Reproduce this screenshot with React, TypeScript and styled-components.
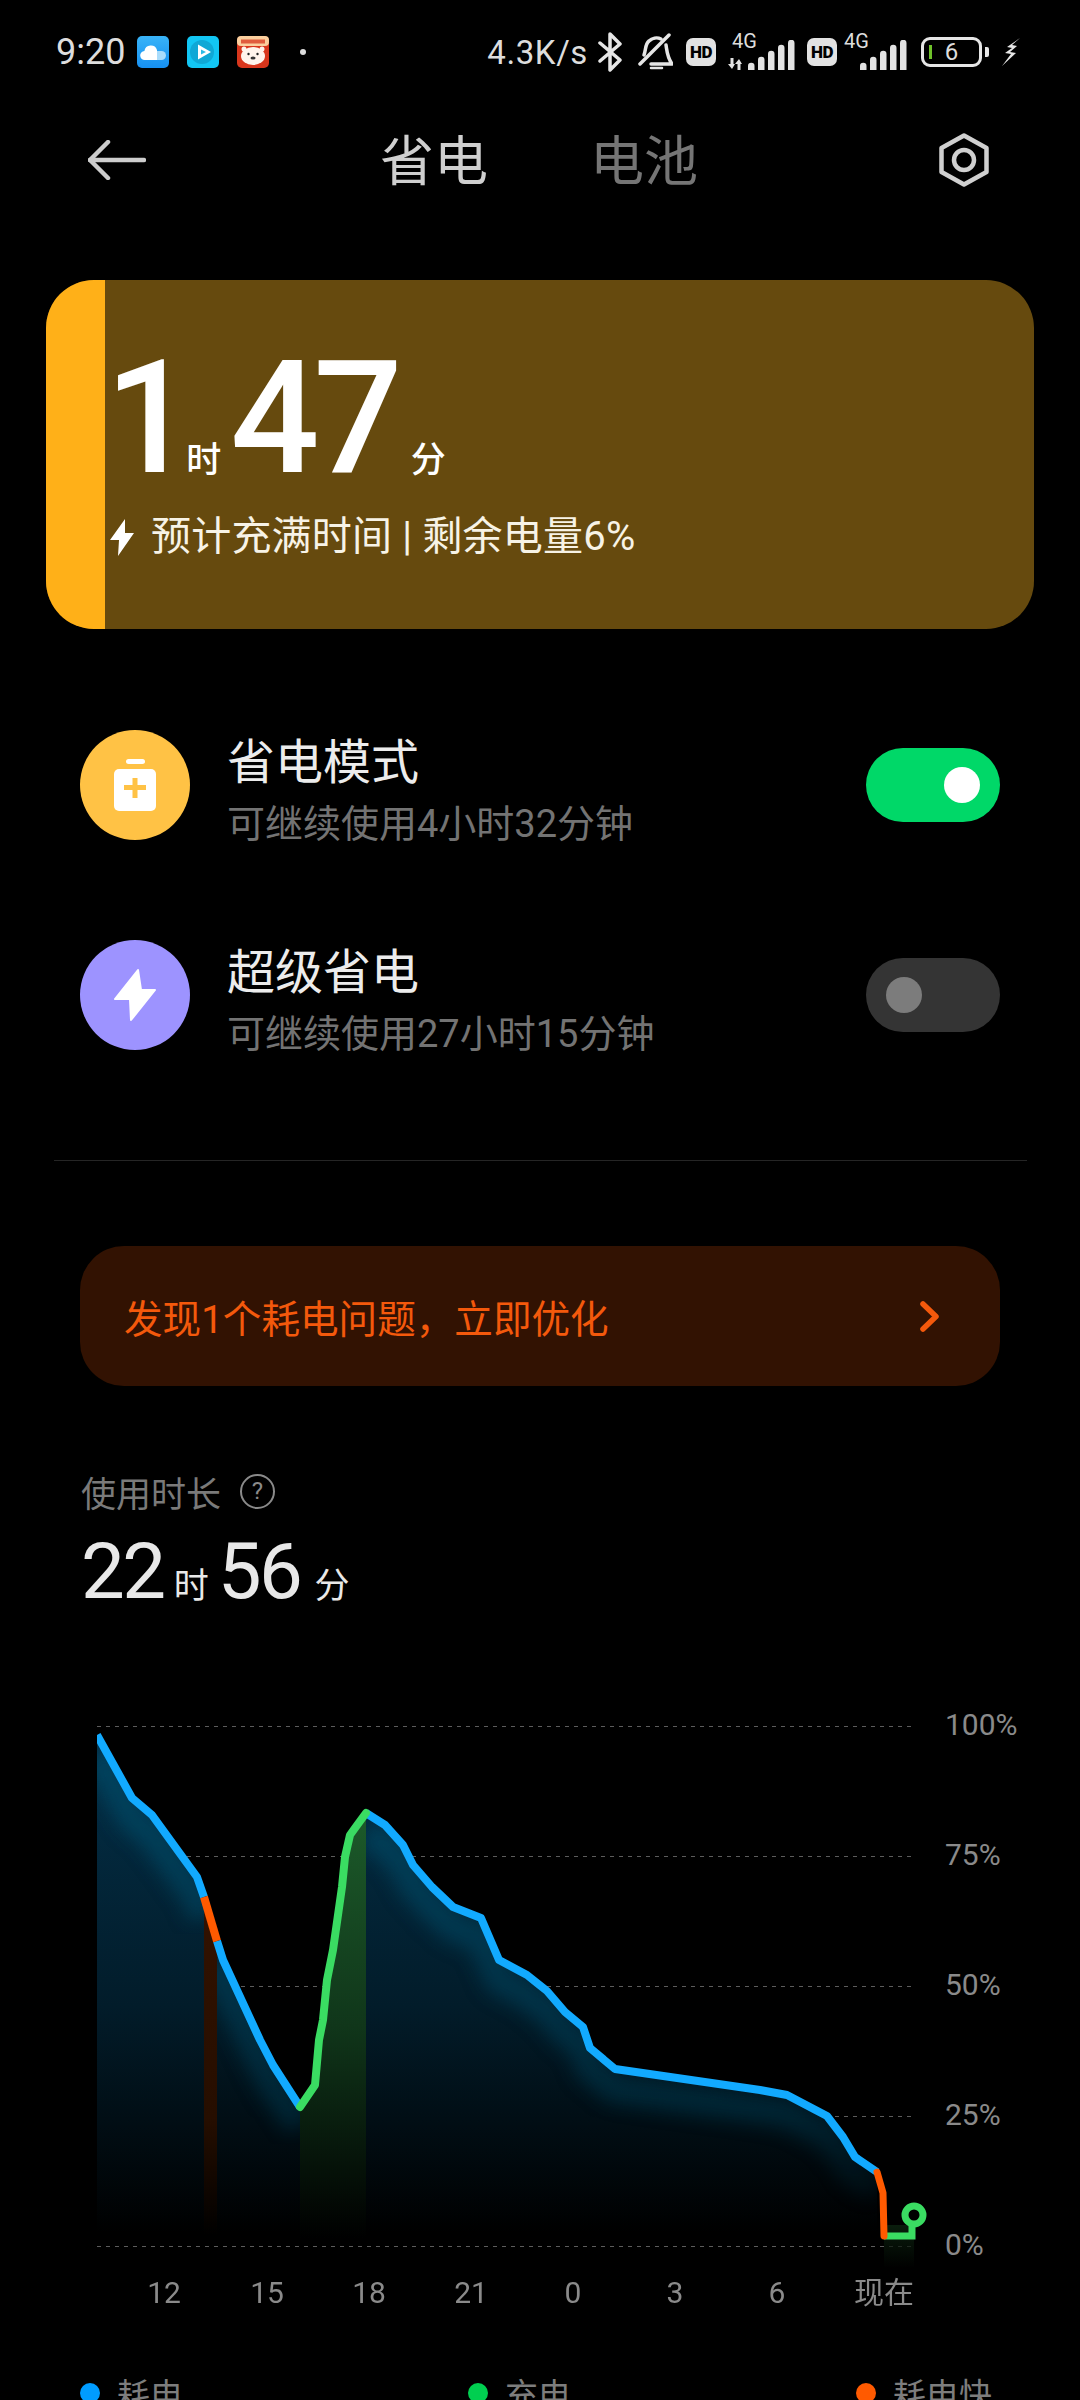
import React from 'react';
import styled, { createGlobalStyle } from 'styled-components';

const GlobalStyle = createGlobalStyle`
html, body {
  margin: 0;
  padding: 0;
  background: #000;
}
body {
  font-family: Roboto, "Noto Sans CJK SC", sans-serif;
}
`;

const Page = styled.div`
width: 1080px;
height: 2400px;
overflow: hidden;
background: #000;
color: #eee;
`;

const StatusBar = styled.div`
display: flex;
justify-content: space-between;
align-items: center;
height: 104px;
padding: 0 60px 0 56px;
`;

const StatusGroup = styled.div`
display: flex;
align-items: center;
`;

const Clock = styled.span`
font-size: 36px;
color: #ddd;
width: 81px;
`;

const Slot = styled.div<{ $gap: number }>`
display: flex;
margin-left: ${(p) => p.$gap}px;
`;

const NotifDot = styled.span`
width: 6px;
height: 6px;
border-radius: 50%;
background: #ddd;
margin-left: 31px;
`;

const NetSpeed = styled.span`
font-size: 33px;
color: #ddd;
letter-spacing: 0.6px;
`;

const HdBadge = styled.span`
display: flex;
align-items: center;
justify-content: center;
width: 30px;
height: 28px;
border-radius: 7px;
background: #e2e2e2;
color: #000;
font-size: 17px;
font-weight: 900;
letter-spacing: -0.5px;
`;

const SignalCell = styled.div<{ $w: number }>`
position: relative;
width: ${(p) => p.$w}px;
height: 36px;
display: flex;
justify-content: flex-end;
align-items: flex-end;
`;

const ArrowWrap = styled.div`
display: flex;
margin-right: 5px;
`;

const NetLabel = styled.span<{ $left: number }>`
position: absolute;
top: -3px;
left: ${(p) => p.$left}px;
font-size: 20px;
line-height: 20px;
color: #ddd;
`;

const BatteryShell = styled.div`
position: relative;
display: flex;
align-items: center;
justify-content: center;
box-sizing: border-box;
width: 61px;
height: 30px;
border: 3px solid #e6e6e6;
border-radius: 9px;
font-size: 24px;
color: #ddd;
&::before {
  content: "";
  position: absolute;
  left: 5px;
  top: 5px;
  width: 3px;
  height: 14px;
  background: #6fc22a;
}
&::after {
  content: "";
  position: absolute;
  right: -10px;
  top: 7px;
  width: 4px;
  height: 10px;
  border-radius: 0 2px 2px 0;
  background: #e6e6e6;
}
`;

const NavBar = styled.nav`
display: flex;
align-items: center;
justify-content: space-between;
height: 112px;
padding: 0 91px 0 88px;
margin-bottom: 64px;
`;

const Tabs = styled.div`
display: flex;
gap: 102px;
margin: 6px 7px 0 0;
`;

const Tab = styled.span<{ $active?: boolean }>`
font-size: 54px;
line-height: 64px;
color: ${(p) => (p.$active ? '#cfcfcf' : '#757575')};
`;

const SummaryCard = styled.section`
display: flex;
height: 349px;
margin: 0 46px;
border-radius: 48px;
overflow: hidden;
background: #664a0e;
`;

const ChargeStrip = styled.div`
width: 59px;
background: #ffb018;
`;

const SummaryBody = styled.div`
display: flex;
flex-direction: column;
padding: 52px 0 0 0;
color: #fff;
`;

const BigTime = styled.div`
display: flex;
align-items: baseline;
height: 172px;
`;

const BigNum = styled.span<{ $gap: number; $track: number }>`
font-size: 157px;
font-weight: 500;
line-height: 172px;
letter-spacing: ${(p) => p.$track}px;
margin-left: ${(p) => p.$gap}px;
`;

const BigUnit = styled.span<{ $gap: number }>`
font-size: 35px;
font-weight: 500;
margin-left: ${(p) => p.$gap}px;
`;

const ChargeHint = styled.div`
display: flex;
align-items: center;
margin: 8px 0 0 5px;
font-size: 40px;
line-height: 50px;
letter-spacing: 0.2px;
color: #f7f3e6;
gap: 17px;
`;

const ModeRow = styled.div`
display: flex;
align-items: center;
height: 210px;
padding: 0 80px;
`;

const ModeList = styled.div`
margin-top: 51px;
`;

const ModeIcon = styled.div<{ $color: string }>`
display: flex;
align-items: center;
justify-content: center;
flex: none;
width: 110px;
height: 110px;
border-radius: 50%;
background: ${(p) => p.$color};
`;

const ModeText = styled.div`
flex: 1;
margin-left: 37px;
padding-top: 12px;
`;

const ModeTitle = styled.div`
font-size: 48px;
line-height: 60px;
color: #ececec;
`;

const ModeSub = styled.div`
font-size: 38px;
line-height: 50px;
margin-top: 6px;
color: #737373;
`;

const Toggle = styled.div<{ $on?: boolean }>`
display: flex;
align-items: center;
justify-content: ${(p) => (p.$on ? 'flex-end' : 'flex-start')};
box-sizing: border-box;
width: 134px;
height: 74px;
padding: 0 20px;
border-radius: 37px;
background: ${(p) => (p.$on ? '#00d868' : '#343434')};
`;

const ToggleKnob = styled.span<{ $on?: boolean }>`
width: 36px;
height: 36px;
border-radius: 50%;
background: ${(p) => (p.$on ? '#fff' : '#7c7c7c')};
`;

const Divider = styled.hr`
height: 1px;
margin: 60px 53px 0 54px;
border: 0;
background: #252525;
`;

const IssueBanner = styled.div`
display: flex;
align-items: center;
justify-content: space-between;
box-sizing: border-box;
height: 140px;
margin: 85px 80px 0;
padding: 0 59px 0 44px;
border-radius: 44px;
background: #321202;
color: #f4590c;
font-size: 38.6px;
`;

const UsageLabel = styled.div`
display: flex;
align-items: center;
gap: 19px;
height: 56px;
margin: 77px 0 0 81px;
font-size: 35px;
color: #7a7a7a;
`;

const HelpMark = styled.span`
display: flex;
align-items: center;
justify-content: center;
box-sizing: border-box;
width: 35px;
height: 35px;
border: 2px solid #8a8a8a;
border-radius: 50%;
font-size: 24px;
color: #8a8a8a;
`;

const UsageValue = styled.div`
display: flex;
align-items: baseline;
height: 88px;
margin: 9px 0 0 81px;
color: #e8e8e8;
`;

const UsageNum = styled.span<{ $gap: number }>`
font-size: 78px;
line-height: 88px;
letter-spacing: -2.5px;
margin-left: ${(p) => p.$gap}px;
`;

const UsageUnit = styled.span<{ $gap: number }>`
font-size: 35px;
margin-left: ${(p) => p.$gap}px;
`;

const ChartBox = styled.svg`
display: block;
margin-top: 84px;
width: 1080px;
height: 650px;
`;

const Legend = styled.div`
display: grid;
grid-template-columns: repeat(3, 388px);
padding-left: 80px;
height: 86px;
`;

const LegendItem = styled.div`
display: flex;
align-items: center;
gap: 17px;
font-size: 33px;
color: #7d7d7d;
`;

const LegendDot = styled.span<{ $color: string }>`
width: 20px;
height: 20px;
border-radius: 50%;
background: ${(p) => p.$color};
`;

const AppIcon = styled.svg`
display: block;
width: 32px;
height: 32px;
`;

const GRID = [1726, 1856, 1986, 2116, 2246];
const PCT = ['100%', '75%', '50%', '25%', '0%'];
const HOURS: [string, number][] = [['12', 164], ['15', 267], ['18', 369], ['21', 471], ['0', 573], ['3', 675], ['6', 777], ['现在', 884]];

const BLUE_A = '97,1735 132,1798 152,1815 197,1877 204,1897';
const ORANGE_A = '204,1897 217,1941';
const BLUE_B = '217,1941 223,1960 260,2040 273,2065 300,2107';
const GREEN_A = '300,2107 315,2085 319,2040 323,2020 327,1980 333,1950 342,1887 345,1857 350,1835 366,1813';
const BLUE_C = '366,1813 385,1825 403,1845 413,1865 432,1887 453,1907 481,1918 499,1960 527,1975 547,1991 565,2012 583,2027 590,2048 615,2069 760,2090 787,2095 827,2116 843,2137 855,2157 877,2172';
const ORANGE_B = '877,2172 883,2193 884,2236';
const GREEN_B = '884,2236 912,2236 912,2215';

const BOTTOM = 2240;
// close a line segment down to the bottom of the plot
const area = (pts: string) => {
  const list = pts.split(' ');
  const first = list[0].split(',')[0];
  const last = list[list.length - 1].split(',')[0];
  return `${first},${BOTTOM} ${pts} ${last},${BOTTOM}`;
};
const BLUE_LINE = [BLUE_A, BLUE_B, BLUE_C];

const BatteryChart = () => (
  <ChartBox viewBox="0 1700 1080 650">
    <defs>
      <linearGradient id="blueFill" gradientUnits="userSpaceOnUse" x1="0" y1="1730" x2="0" y2="2232">
        <stop offset="0" stopColor="#033049" />
        <stop offset="0.55" stopColor="#021c2a" />
        <stop offset="1" stopColor="#000" />
      </linearGradient>
      <linearGradient id="greenFill" gradientUnits="userSpaceOnUse" x1="0" y1="1815" x2="0" y2="2238">
        <stop offset="0" stopColor="#1c5a2a" />
        <stop offset="0.5" stopColor="#10361a" />
        <stop offset="1" stopColor="#000" />
      </linearGradient>
      <linearGradient id="redFill" gradientUnits="userSpaceOnUse" x1="0" y1="1900" x2="0" y2="2235">
        <stop offset="0" stopColor="#331200" />
        <stop offset="0.65" stopColor="#260e00" />
        <stop offset="1" stopColor="#000" />
      </linearGradient>
      <linearGradient id="glowFade" gradientUnits="userSpaceOnUse" x1="0" y1="1730" x2="0" y2="2235">
        <stop offset="0" stopColor="#fff" />
        <stop offset="0.75" stopColor="#888" />
        <stop offset="1" stopColor="#000" />
      </linearGradient>
      <linearGradient id="tailFill" gradientUnits="userSpaceOnUse" x1="0" y1="2225" x2="0" y2="2268">
        <stop offset="0" stopColor="#0e2a12" />
        <stop offset="1" stopColor="#000" />
      </linearGradient>
      <clipPath id="blueClip">
        {BLUE_LINE.map((seg) => <polygon key={seg} points={area(seg)} />)}
      </clipPath>
      <clipPath id="plotClip">
        <rect x="97" y="1700" width="900" height="600" />
      </clipPath>
      <mask id="glowMask" maskUnits="userSpaceOnUse" x="0" y="1700" width="1080" height="600">
        <rect x="0" y="1700" width="1080" height="600" fill="url(#glowFade)" />
      </mask>
      <filter id="soft" x="-10%" y="-10%" width="120%" height="120%">
        <feGaussianBlur stdDeviation="9" />
      </filter>
    </defs>

    {GRID.map((y, i) => (
      <g key={y}>
        <line x1="97" x2="914" y1={y + 0.5} y2={y + 0.5} stroke="#5c5c5c" strokeWidth="1" strokeDasharray="4 5" />
        <text x="945" y={y + 9} fontSize="30" fill="#8a8a8a">{PCT[i]}</text>
      </g>
    ))}

    {BLUE_LINE.map((seg) => <polygon key={seg} points={area(seg)} fill="url(#blueFill)" />)}
    <g clipPath="url(#blueClip)" mask="url(#glowMask)">
      {BLUE_LINE.map((seg) => (
        <polyline key={seg} points={seg} fill="none" stroke="#075272" strokeOpacity="0.6" strokeWidth="30" filter="url(#soft)" transform="translate(0 20)" />
      ))}
    </g>
    <polygon points={area(ORANGE_A)} fill="url(#redFill)" />
    <polygon points={area(GREEN_A)} fill="url(#greenFill)" />
    <rect x="884" y="2225" width="30" height="43" fill="url(#tailFill)" opacity="0.7" />

    <g clipPath="url(#plotClip)">
      {BLUE_LINE.map((seg) => (
        <polyline key={seg} points={seg} fill="none" stroke="#12aaff" strokeWidth="8" strokeLinejoin="round" />
      ))}
    </g>
    <polyline points={GREEN_A} fill="none" stroke="#3adc62" strokeWidth="8" strokeLinejoin="round" strokeLinecap="round" />
    <polyline points={ORANGE_A} fill="none" stroke="#ff5a00" strokeWidth="8" />
    <polyline points={GREEN_B} fill="none" stroke="#3adc62" strokeWidth="7" />
    <polyline points={ORANGE_B} fill="none" stroke="#ff5a00" strokeWidth="7" strokeLinecap="round" strokeLinejoin="round" />
    <circle cx="914" cy="2215" r="9" fill="#000" stroke="#3adc62" strokeWidth="7" />

    {HOURS.map(([label, x]) => (
      <text key={label} x={x} y="2303" fontSize="30" textAnchor="middle" fill="#8a8a8a">{label}</text>
    ))}
  </ChartBox>
);

const CloudIcon = () => (
  <AppIcon viewBox="0 0 32 32">
    <defs>
      <linearGradient id="cloudBg" x1="0" y1="0" x2="0" y2="1">
        <stop offset="0" stopColor="#39b4f8" />
        <stop offset="1" stopColor="#1690f2" />
      </linearGradient>
    </defs>
    <rect width="32" height="32" rx="5" fill="url(#cloudBg)" />
    <path d="M20 24h4.500a4.500 4.500 0 0 0 0-9H20z" fill="#a9dcfb" />
    <path d="M8 24a4.500 4.500 0 0 1-.6-9A6.500 6.500 0 0 1 20 14v10z" fill="#fff" />
  </AppIcon>
);

const PlayIcon = () => (
  <AppIcon viewBox="0 0 32 32">
    <rect width="32" height="32" rx="5" fill="#12c6f4" />
    <circle cx="15" cy="16" r="12" fill="#0fa8d6" />
    <path d="M11 8.500 24 16 11 23.500z" fill="#fff" />
    <path d="M14 13.500 19 16 14 18.500z" fill="#2dbce6" />
  </AppIcon>
);

const BearIcon = () => (
  <AppIcon viewBox="0 0 32 32">
    <rect width="32" height="32" rx="5" fill="#d8361c" />
    <rect width="32" height="10" rx="4" fill="#fbcf9e" />
    <rect x="4" y="3.500" width="24" height="4" fill="#d8361c" opacity="0.75" />
    <ellipse cx="16" cy="20" rx="12" ry="9" fill="#fff4ec" />
    <circle cx="7" cy="13" r="2.500" fill="#fff4ec" />
    <circle cx="25" cy="13" r="2.500" fill="#fff4ec" />
    <circle cx="11.500" cy="18" r="1.200" fill="#222" />
    <circle cx="20.500" cy="18" r="1.200" fill="#222" />
    <ellipse cx="16" cy="22" rx="2.500" ry="1.500" fill="#333" />
  </AppIcon>
);

const SignalBars = () => (
  <svg width="47" height="30" viewBox="0 0 47 30" fill="#e2e2e2">
    <path d="M0 30v-4a3 3 0 0 1 6.500 0v4z" />
    <path d="M10 30V20a3 3 0 0 1 6.500 0v10z" />
    <path d="M20 30V14a3 3 0 0 1 6.500 0v16z" />
    <path d="M30 30V8a3 3 0 0 1 6.500 0v22z" />
    <path d="M40 30V3a3 3 0 0 1 6.500 0v27z" />
  </svg>
);

const DataArrows = () => (
  <svg width="15" height="12" viewBox="0 0 15 12" fill="#e2e2e2">
    <path d="M0 6h2.500V0h3v6H7l-3 5z" />
    <path d="M8 6h2.500v6h3V6H15l-3-5z" transform="translate(-1 0)" />
  </svg>
);

const App = () => (
  <>
    <GlobalStyle />
    <Page>
      <StatusBar>
        <StatusGroup>
          <Clock>9:20</Clock>
          <CloudIcon />
          <Slot $gap={18}><PlayIcon /></Slot>
          <Slot $gap={18}><BearIcon /></Slot>
          <NotifDot />
        </StatusGroup>
        <StatusGroup>
          <NetSpeed>4.3K/s</NetSpeed>
          <Slot $gap={10}>
            <svg width="24" height="40" viewBox="0 0 24 40" fill="none" stroke="#e6e6e6" strokeWidth="3.5" strokeLinejoin="round" strokeLinecap="round">
              <path d="M2 11 22 28 12 38V2L22 12 2 29" />
            </svg>
          </Slot>
          <Slot $gap={16}>
            <svg width="35" height="38" viewBox="0 0 35 38" fill="none" stroke="#e6e6e6" strokeWidth="3.5" strokeLinecap="round" strokeLinejoin="round">
              <path d="M6 22C8 17 7 11 11 8c3-3 8-4 12-2" />
              <path d="M28 12c1 6 1 12 6 19H13" />
              <path d="M2 31 31 2" />
              <path d="M13 35h11" strokeWidth="2.500" />
            </svg>
          </Slot>
          <Slot $gap={13}><HdBadge>HD</HdBadge></Slot>
          <Slot $gap={12}>
            <SignalCell $w={67}>
              <NetLabel $left={4}>4G</NetLabel>
              <ArrowWrap><DataArrows /></ArrowWrap>
              <SignalBars />
            </SignalCell>
          </Slot>
          <Slot $gap={12}><HdBadge>HD</HdBadge></Slot>
          <Slot $gap={7}>
            <SignalCell $w={63}>
              <NetLabel $left={0}>4G</NetLabel>
              <SignalBars />
            </SignalCell>
          </Slot>
          <Slot $gap={14}><BatteryShell>6</BatteryShell></Slot>
          <Slot $gap={20}>
            <svg width="18" height="28" viewBox="0 0 18 28" fill="#e6e6e6">
              <path d="M18 0 5 9l5 1-7 5 6 1-9 12 14-13-6-1 7-6-5-1z" />
            </svg>
          </Slot>
        </StatusGroup>
      </StatusBar>

      <NavBar>
        <svg width="58" height="40" viewBox="0 0 58 40" fill="none" stroke="#cdcdcd" strokeWidth="4.500" strokeLinecap="round" strokeLinejoin="round">
          <path d="M20 2 2 20l18 18" />
          <path d="M2 20h54" />
        </svg>
        <Tabs>
          <Tab $active>省电</Tab>
          <Tab>电池</Tab>
        </Tabs>
        <svg width="50" height="54" viewBox="0 0 50 54" fill="none" stroke="#d0d0d0" strokeWidth="4.500" strokeLinejoin="round">
          <path d="M25 2.500 47.500 15v24L25 51.500 2.500 39V15z" />
          <circle cx="25" cy="27" r="10" />
        </svg>
      </NavBar>

      <SummaryCard>
        <ChargeStrip />
        <SummaryBody>
          <BigTime>
            <BigNum $gap={0} $track={-9}>1</BigNum>
            <BigUnit $gap={1}>时</BigUnit>
            <BigNum $gap={9} $track={-6}>47</BigNum>
            <BigUnit $gap={14}>分</BigUnit>
          </BigTime>
          <ChargeHint>
            <svg width="24" height="37" viewBox="0 0 24 37" fill="#fff">
              <path d="M15 0 0 21h9L8 37l16-23h-9z" />
            </svg>
            预计充满时间 | 剩余电量6%
          </ChargeHint>
        </SummaryBody>
      </SummaryCard>

      <ModeList>
        <ModeRow>
          <ModeIcon $color="#ffc245">
            <svg width="42" height="52" viewBox="0 0 42 52">
              <rect x="12" y="0" width="19" height="5" rx="2.500" fill="#fff" />
              <rect x="0" y="10" width="42" height="42" rx="5" fill="#fff" />
              <path d="M10 28.500h22M21 19v20" stroke="#ffc245" strokeWidth="5" />
            </svg>
          </ModeIcon>
          <ModeText>
            <ModeTitle>省电模式</ModeTitle>
            <ModeSub>可继续使用4小时32分钟</ModeSub>
          </ModeText>
          <Toggle $on><ToggleKnob $on /></Toggle>
        </ModeRow>
        <ModeRow>
          <ModeIcon $color="#9d93ff">
            <svg width="44" height="54" viewBox="0 0 44 54" fill="#fff" stroke="#fff" strokeWidth="2" strokeLinejoin="round">
              <path d="M25 2 2 31h15l1 21 24-30H28z" />
            </svg>
          </ModeIcon>
          <ModeText>
            <ModeTitle>超级省电</ModeTitle>
            <ModeSub>可继续使用27小时15分钟</ModeSub>
          </ModeText>
          <Toggle><ToggleKnob /></Toggle>
        </ModeRow>
      </ModeList>

      <Divider />

      <IssueBanner>
        发现1个耗电问题，立即优化
        <svg width="22" height="31" viewBox="0 0 22 31" fill="none" stroke="#f4590c" strokeWidth="5.500" strokeLinecap="round" strokeLinejoin="round">
          <path d="M4 3l13 12.500L4 28" />
        </svg>
      </IssueBanner>

      <UsageLabel>
        使用时长
        <HelpMark>?</HelpMark>
      </UsageLabel>
      <UsageValue>
        <UsageNum $gap={0}>22</UsageNum>
        <UsageUnit $gap={10}>时</UsageUnit>
        <UsageNum $gap={9}>56</UsageNum>
        <UsageUnit $gap={14}>分</UsageUnit>
      </UsageValue>

      <BatteryChart />

      <Legend>
        <LegendItem><LegendDot $color="#009cff" />耗电</LegendItem>
        <LegendItem><LegendDot $color="#00cf50" />充电</LegendItem>
        <LegendItem><LegendDot $color="#ff5a00" />耗电快</LegendItem>
      </Legend>
    </Page>
  </>
);

export default App;
